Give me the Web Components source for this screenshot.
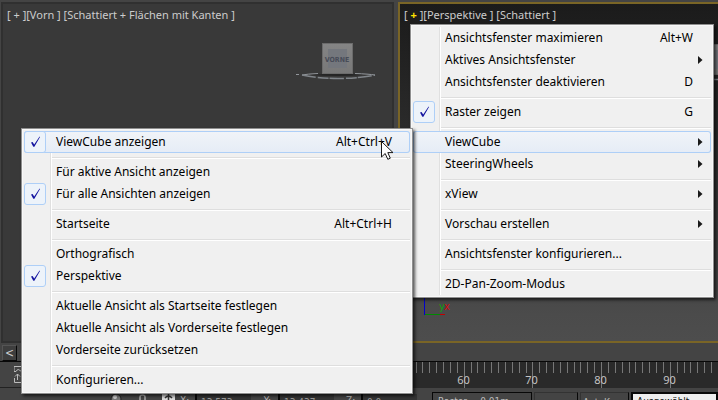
<!DOCTYPE html>
<html lang="de">
<head>
<meta charset="utf-8">
<title>Ansichtsfenster</title>
<style>
html, body { margin: 0; height: 100%; overflow: hidden; background: #444; }
</style>
</head>
<body>
<scene-editor></scene-editor>
<script>
const define = (name, html, setup) => {
  const template = document.createElement('template');
  template.innerHTML = html;
  customElements.define(name, class extends HTMLElement {
    connectedCallback() {
      if (this.shadowRoot) return;
      this.attachShadow({ mode: 'open' }).append(template.content.cloneNode(true));
      if (setup) setup(this, this.shadowRoot);
    }
  });
};

define('menu-item', `
<style>
:host { display: block; }
button { display: grid; grid-template-columns: 22px 1fr auto 18px; align-items: center; width: 100%; height: 22px;
  margin: 0; padding: 0; border: 0; border-radius: 3px; background: none; font: inherit; color: inherit; text-align: left; }
.check { box-sizing: border-box; width: 22px; height: 22px; border-radius: 3px; }
.label { padding-left: 10px; white-space: nowrap; }
.check svg, .arrow svg { display: block; visibility: hidden; }
.arrow { padding-left: 5px; }
:host([checked]) .check { border: 1px solid #aecff7; background: #edf3fa; }
:host([checked]) .check svg { visibility: visible; }
:host([submenu]) .arrow svg { visibility: visible; }
:host([active]) button { background: linear-gradient(#f1f4f8, #e5ecf6); box-shadow: inset 0 0 0 1px #aecff7; }
</style>
<button type="button" role="menuitem">
  <span class="check"><svg width="20" height="20" viewBox="0 0 20 20"><path d="M6 10.500 7.600 9.900 9.200 12.500 14.600 4.500 15 5 9.400 14.800 8.300 14.800Z" fill="#1515a0"/></svg></span>
  <span class="label"><slot></slot></span>
  <span class="key"></span>
  <span class="arrow"><svg width="5" height="8" viewBox="0 0 5 8"><path d="M0 0 4.500 4 0 8Z" fill="#1a1a1a"/></svg></span>
</button>`, (host, root) => {
  root.querySelector('.key').textContent = host.getAttribute('key') || '';
  if (host.hasAttribute('checked')) {
    const b = root.querySelector('button');
    b.setAttribute('role', 'menuitemcheckbox');
    b.setAttribute('aria-checked', 'true');
  }
});

define('menu-rule', `
<style>
:host { display: block; height: 8px; padding: 4px 0 0 28px; box-sizing: border-box; }
div { height: 1px; background: #dedede; border-bottom: 1px solid #fff; }
</style><div role="separator"></div>`);

define('popup-menu', `
<style>
:host { display: block; box-sizing: border-box; padding: 2px; border: 1px solid #8f8f8f;
  background: linear-gradient(90deg, transparent 28px, #e0e0e0 28px 29px, #fff 29px 30px, transparent 30px) 0 2px / 100% calc(100% - 4px) no-repeat #f0f0f0;
  box-shadow: inset 0 0 0 1px #f8f8f8, 2px 2px 3px rgba(0,0,0,.65);
  font: 12px/22px "Noto Sans", "Open Sans", sans-serif; color: #000; }
</style><div role="menu"><slot></slot></div>`);

define('view-port', `
<style>
:host { display: block; position: relative; box-sizing: border-box; border: 2px solid #303030; background: #393939; overflow: hidden; }
:host([active]) { border-color: #7a6526; border-right: 0; background: linear-gradient(#1b1b1b, #2b2b2b 38%, #4b4b4b 92%, #4d4d4d); }
header { display: flex; padding: 4px 0 0 4px; font: 11px/14px "Noto Sans", "Open Sans", sans-serif; color: #ccc; white-space: pre; }
</style>
<header><slot name="title"></slot></header><slot></slot>`);

define('view-cube', `
<style>:host { display: block; } svg { display: block; }</style>
<svg width="84" height="40" viewBox="0 0 84 40" role="img" aria-label="ViewCube">
  <defs><linearGradient id="f" x2="0" y2="1"><stop stop-color="#858585"/><stop offset="1" stop-color="#787878"/></linearGradient></defs>
  <path d="M1 31.500H4M7 32Q12 31 23 30.500M60 30.500Q74 31 80 32" stroke="#92969b" fill="none"/>
  <path d="M7 32Q23 35.500 43 35.500T80 32" stroke="#80858a" stroke-width="1.500" fill="none" stroke-dasharray="14 2 11 1"/>
  <path d="M15 32Q43 29 68 32 43 34 15 32Z" fill="#252525"/>
  <rect x="27.500" y="0.500" width="30" height="30" fill="url(#f)" stroke="#6b6b6b"/>
  <rect x="33" y="6" width="19" height="19" fill="#74777d"/>
</svg>`, (host, root) => {
  if (host.hasAttribute('face')) {
    root.querySelector('svg').insertAdjacentHTML('beforeend',
      `<text x="42" y="19" text-anchor="middle" font-family="DejaVu Sans Condensed, sans-serif" font-weight="bold" font-size="7" fill="#484c58">${host.getAttribute('face')}</text>`);
  }
});

define('time-ruler', `
<style>
:host { display: block; height: 26px; overflow: hidden; background: #2a2a2a; border-top: 1px solid #080808; }
svg { display: block; }
</style><svg width="1400" height="26"></svg>`, (host, root) => {
  let marks = '';
  for (let frame = 1; frame < 200; frame++) {
    const x = Math.floor(8 + frame * 6.87) + 0.5;
    marks += `<path d="M${x} 0v${frame % 10 ? 11 : 26}" stroke="#777"/>`;
    if (frame % 10 === 0 && frame >= 60 && frame <= 90) marks += `<text x="${x - 1}" y="22" text-anchor="middle" font-family="Noto Sans, sans-serif" font-size="11" fill="#c4c4c4">${frame}</text>`;
  }
  root.querySelector('svg').innerHTML = marks;
});

define('status-bar', `
<style>
:host { display: flex; height: 12px; padding-left: 110px; background: #444; font: 10px/14px "DejaVu Sans Condensed", sans-serif; color: #bbb; overflow: hidden; }
.icons { display: flex; gap: 14px; width: 70px; padding-top: 5px; flex: none; }
svg { display: block; flex: none; }
label { display: flex; flex: none; gap: 7px; width: 83px; padding-top: 6px; box-sizing: border-box; }
input { box-sizing: border-box; width: 56px; height: 16px; border: 0; border-left: 2px solid #080808; background: #343434; color: #999; padding: 0 4px; font: inherit; }
label span { width: 8px; text-align: right; }
.panel, button { box-sizing: border-box; flex: none; height: 20px; margin: 4px 2px 0 0; padding: 2px 5px 0; border: 1px solid #080808; background: #444; color: #bbb; font: inherit; text-align: left; white-space: nowrap; }
.grid { width: 100px; margin-left: 3px; }
.blank { width: 44px; border-color: #333; border-right-color: #080808; }
.key { width: 49px; padding: 2px 2px 0; border-left-color: #333; border-top-color: #333; }
select { appearance: none; box-sizing: border-box; flex: 1; min-width: 84px; height: 20px; margin: 4px 0 0; padding: 0 4px; border: 2px solid #080808; border-radius: 0; background: #eee; color: #111; font: inherit; }
</style>
<div class="icons">
  <svg width="12" height="12" viewBox="0 0 12 12"><circle cx="6" cy="6" r="5" fill="#777" stroke="#222"/><circle cx="5" cy="4" r="2" fill="#ccc"/></svg>
  <svg width="12" height="12" viewBox="0 0 12 12"><path d="M4 8V4Q4 2 6.500 2T9 4V8" stroke="#aaa" stroke-width="1.500" fill="none"/></svg>
  <svg width="13" height="12" viewBox="0 0 13 12"><path fill="#ddd" d="M0 0H13V12H0Z"/><path d="M6.500 0V10M3 5Q6.500 1 10 5" stroke="#333" fill="none" stroke-width="1.500"/></svg>
</div>
<label><span>X:</span><input value="13,573"></label>
<label><span>Y:</span><input value="13,437"></label>
<label><span>Z:</span><input value="0,0"></label>
<div class="panel grid">Raster = 0,01m</div><div class="panel blank"></div>
<button type="button" class="key">AutoKey</button>
<select aria-label="Auswahl"><option>Ausgewählt</option></select>`);

define('scene-editor', `
<style>
:host { display: grid; grid-template-rows: minmax(0, 1fr) auto auto auto; height: 100%; position: relative; background: #444; overflow: hidden; }
.views { display: grid; grid-template-columns: 393fr 320fr; gap: 4px; padding: 2px 0 0 1px; min-height: 0; }
view-port b { color: #ffe000; font-weight: bold; }
.cube { position: absolute; right: 13px; top: 39px; }
.cube.far { right: -39px; top: 40px; }
.axes { position: absolute; left: 23px; bottom: 23px; }
.tools { display: flex; height: 18px; align-items: end; padding-left: 2px; }
.tools button { box-sizing: border-box; width: 15px; height: 16px; padding: 0; border: 1px solid #080808; border-left-color: #555; border-top-color: #555; background: #3e3e3e; color: #ccc; font: 12px/12px "DejaVu Sans Condensed", sans-serif; }
.time { display: grid; grid-template-columns: 44px 1fr; }
.track { height: 27px; padding: 4px 0 0 14px; box-sizing: border-box; border-top: 1px solid #080808; border-bottom: 1px solid #222; }
.main { position: absolute; left: 410px; top: 24px; width: 304px; }
.sub { position: absolute; left: 21px; top: 128px; width: 392px; }
.cursor { position: absolute; left: 381px; top: 141px; }
</style>
<div class="views">
  <view-port><span slot="title">[ + ][Vorn ] [Schattiert + Flächen mit Kanten ]</span><view-cube class="cube" face="VORNE"></view-cube></view-port>
  <view-port active><span slot="title">[ <b>+</b> ][Perspektive ] [Schattiert ]</span><view-cube class="cube far"></view-cube>
    <svg class="axes" width="32" height="30" viewBox="0 0 32 30"><path d="M1.500 0V27" stroke="#0000ce"/><path d="M2 26.500H17" stroke="#008a00"/><path d="M17 26.500H22" stroke="#c00000"/><text x="16" y="22" font-family="DejaVu Sans" font-size="10" fill="#10a010">y</text><text x="21" y="22" font-family="DejaVu Sans" font-size="10" fill="#d01010">x</text></svg>
  </view-port>
</div>
<div class="tools"><button type="button">&lt;</button></div>
<div class="time"><div class="track"><svg width="9" height="17" viewBox="0 0 9 17" fill="none" stroke="#bbb"><path d="M0 5.500V.5H9M0 5.500H2Q4 1.500 7 5.500H9M3.500 14V8M1 10.500 3.500 8 6 10.500M.5 12V16.500H9"/></svg></div><time-ruler></time-ruler></div>
<status-bar></status-bar>
<popup-menu class="main">
  <menu-item key="Alt+W">Ansichtsfenster maximieren</menu-item>
  <menu-item submenu>Aktives Ansichtsfenster</menu-item>
  <menu-item key="D">Ansichtsfenster deaktivieren</menu-item>
  <menu-rule></menu-rule>
  <menu-item key="G" checked>Raster zeigen</menu-item>
  <menu-rule></menu-rule>
  <menu-item submenu active>ViewCube</menu-item>
  <menu-item submenu>SteeringWheels</menu-item>
  <menu-rule></menu-rule>
  <menu-item submenu>xView</menu-item>
  <menu-rule></menu-rule>
  <menu-item submenu>Vorschau erstellen</menu-item>
  <menu-rule></menu-rule>
  <menu-item>Ansichtsfenster konfigurieren...</menu-item>
  <menu-rule></menu-rule>
  <menu-item>2D-Pan-Zoom-Modus</menu-item>
</popup-menu>
<popup-menu class="sub">
  <menu-item key="Alt+Ctrl+V" checked active>ViewCube anzeigen</menu-item>
  <menu-rule></menu-rule>
  <menu-item>Für aktive Ansicht anzeigen</menu-item>
  <menu-item checked>Für alle Ansichten anzeigen</menu-item>
  <menu-rule></menu-rule>
  <menu-item key="Alt+Ctrl+H">Startseite</menu-item>
  <menu-rule></menu-rule>
  <menu-item>Orthografisch</menu-item>
  <menu-item checked>Perspektive</menu-item>
  <menu-rule></menu-rule>
  <menu-item>Aktuelle Ansicht als Startseite festlegen</menu-item>
  <menu-item>Aktuelle Ansicht als Vorderseite festlegen</menu-item>
  <menu-item>Vorderseite zurücksetzen</menu-item>
  <menu-rule></menu-rule>
  <menu-item>Konfigurieren...</menu-item>
</popup-menu>
<svg class="cursor" width="13" height="20" viewBox="0 0 13 20"><path d="M.5.5V16L4.200 12.500 6.800 18.300 9.300 17.200 6.800 11.600H12Z" fill="#fff" stroke="#181818"/></svg>`);
</script>
</body>
</html>
